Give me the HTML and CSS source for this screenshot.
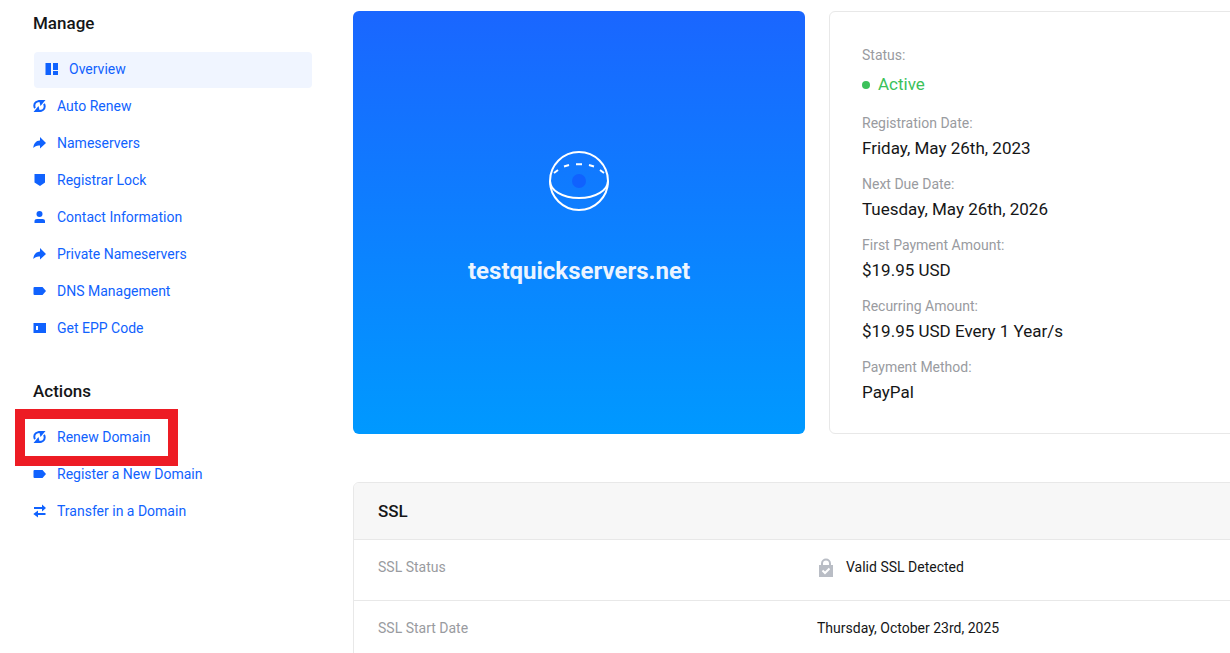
FILE: index.html
```html
<!DOCTYPE html>
<html lang="en">

<head>
    <meta charset="UTF-8">
    <meta name="viewport" content="width=device-width, initial-scale=1.0">
    <title>testquickservers.net</title>
    <link rel="stylesheet" href="styles.css">
</head>

<body>

    <!-- Shared icons -->
    <svg class="sprite" aria-hidden="true">
        <symbol id="icon-renew" viewBox="0 0 14 14">
            <path d="M7 2C3.500 2 1.300 4 1.300 6.500c0 1.300.2 2 .7 2.700M6 12c3.500 0 5.700-2 5.700-4.500 0-1.300-.2-2-.7-2.700" fill="none" stroke="currentColor" stroke-width="2" />
            <path d="M5 1H12.500L7.500 7 6.500 3zM8 13H.5L5.500 7l1 4z" fill="currentColor" />
        </symbol>
        <symbol id="icon-arrow" viewBox="0 0 14 14">
            <path d="M7 1 13 7 7 12.500V9.500C4 9.200 2 10 .3 12 .6 7.500 3 4.700 7 4.500z" fill="currentColor" />
        </symbol>
        <symbol id="icon-tag" viewBox="0 0 14 14">
            <path d="M1.500 3H9.500L13 7l-3.500 4h-8a1 1 0 0 1-1-1V4a1 1 0 0 1 1-1z" fill="currentColor" />
        </symbol>
    </svg>

    <div class="page">
        <!-- Sidebar -->
        <aside class="sidebar">
            <nav class="menu">
                <h2 class="menu-title">Manage</h2>
                <ul class="menu-list">
                    <li><a href="#" class="menu-link active">
                        <svg class="icon" viewBox="0 0 14 14"><path d="M.5 1h5.500v12H.5zM8 1h5v7H8zM8 9h5v4H8z" fill="currentColor" /></svg>
                        Overview</a></li>
                    <li><a href="#" class="menu-link"><svg class="icon"><use href="#icon-renew" /></svg>Auto Renew</a></li>
                    <li><a href="#" class="menu-link"><svg class="icon"><use href="#icon-arrow" /></svg>Nameservers</a></li>
                    <li><a href="#" class="menu-link">
                        <svg class="icon" viewBox="0 0 14 14"><path d="M1.500 1h10.500v8.500L7 13 1.500 9.500z" fill="currentColor" /></svg>
                        Registrar Lock</a></li>
                    <li><a href="#" class="menu-link">
                        <svg class="icon" viewBox="0 0 14 14"><circle cx="6.500" cy="4" r="3" fill="currentColor" /><path d="M1.500 13v-2c0-1.300 1-2 2.500-2h5.500c1.500 0 2.500.7 2.500 2v2z" fill="currentColor" /></svg>
                        Contact Information</a></li>
                    <li><a href="#" class="menu-link"><svg class="icon"><use href="#icon-arrow" /></svg>Private Nameservers</a></li>
                    <li><a href="#" class="menu-link"><svg class="icon"><use href="#icon-tag" /></svg>DNS Management</a></li>
                    <li><a href="#" class="menu-link">
                        <svg class="icon" viewBox="0 0 14 14"><path d="M.5 2H13v10H.5zM3 5v4h2V5z" fill="currentColor" fill-rule="evenodd" /></svg>
                        Get EPP Code</a></li>
                </ul>
            </nav>

            <nav class="menu">
                <h2 class="menu-title">Actions</h2>
                <ul class="menu-list">
                    <li class="highlight"><a href="#" class="menu-link"><svg class="icon"><use href="#icon-renew" /></svg>Renew Domain</a></li>
                    <li><a href="#" class="menu-link"><svg class="icon"><use href="#icon-tag" /></svg>Register a New Domain</a></li>
                    <li><a href="#" class="menu-link">
                        <svg class="icon" viewBox="0 0 14 14"><path d="M1 3h8V.5L13 4 9 7.500V5H1zM12.500 9H5V6.500L.3 10 5 13.500V11h7.500z" fill="currentColor" /></svg>
                        Transfer in a Domain</a></li>
                </ul>
            </nav>
        </aside>

        <!-- Domain details -->
        <main class="content">
            <div class="overview">
                <section class="domain-card">
                    <svg class="globe" viewBox="0 0 60 60" aria-hidden="true">
                        <circle cx="30" cy="30" r="29" fill="none" stroke="#fff" stroke-width="2" />
                        <path d="M1 30C1 39 13 47 30 47s29-8 29-17" fill="none" stroke="#fff" stroke-width="2" />
                        <path d="M5 22l4-3M15 15.500l5-1.500M27 13.200h6M40 14l5 1.500M51 19l4 3" fill="none" stroke="#fff" stroke-width="2" />
                        <circle cx="30" cy="30" r="7" fill="#1062fe" />
                    </svg>
                    <h1 class="domain-name">testquickservers.net</h1>
                </section>

                <dl class="info-card">
                    <div class="info-item">
                        <dt>Status:</dt>
                        <dd class="status">Active</dd>
                    </div>
                    <div class="info-item">
                        <dt>Registration Date:</dt>
                        <dd>Friday, May 26th, 2023</dd>
                    </div>
                    <div class="info-item">
                        <dt>Next Due Date:</dt>
                        <dd>Tuesday, May 26th, 2026</dd>
                    </div>
                    <div class="info-item">
                        <dt>First Payment Amount:</dt>
                        <dd>$19.95 USD</dd>
                    </div>
                    <div class="info-item">
                        <dt>Recurring Amount:</dt>
                        <dd>$19.95 USD Every 1 Year/s</dd>
                    </div>
                    <div class="info-item">
                        <dt>Payment Method:</dt>
                        <dd>PayPal</dd>
                    </div>
                </dl>
            </div>

            <section class="panel">
                <h2 class="panel-title">SSL</h2>
                <table class="panel-table">
                    <tbody>
                        <tr>
                            <th scope="row">SSL Status</th>
                            <td>
                                <span class="ssl-status">
                                    <svg class="lock" viewBox="0 0 18 20" aria-hidden="true">
                                        <path d="M5 9V6.500a4 4 0 0 1 8 0V9" fill="none" stroke="#b9bdc5" stroke-width="2" />
                                        <path d="M2 8h14v12H2z" fill="#b9bdc5" />
                                        <path d="M5.500 13.500 8 16l4.500-4.500" fill="none" stroke="#fff" stroke-width="2" />
                                    </svg>
                                    Valid SSL Detected
                                </span>
                            </td>
                        </tr>
                        <tr>
                            <th scope="row">SSL Start Date</th>
                            <td>Thursday, October 23rd, 2025</td>
                        </tr>
                    </tbody>
                </table>
            </section>
        </main>
    </div>

</body>

</html>
```

FILE: styles.css
```css
/* General Reset */
*,
*::before,
*::after {
    margin: 0;
    padding: 0;
    box-sizing: border-box;
}

body {
    font-family: Roboto, Arial, sans-serif;
    font-size: 14px;
    line-height: 22px;
    color: #151617;
    background: #fff;
    overflow-x: hidden;
}

.sprite {
    display: none;
}

.page {
    display: grid;
    grid-template-columns: 279px minmax(928px, 1fr);
    gap: 41px;
    padding: 11px 0 0 33px;
}

/* Sidebar */
.menu {
    margin-bottom: 32px;
}

.menu-title {
    font-size: 17px;
    font-weight: 500;
    line-height: 24px;
    margin-bottom: 17px;
}

.menu-list {
    list-style: none;
    display: grid;
    gap: 1px;
}

.menu-link {
    display: flex;
    align-items: center;
    gap: 10px;
    height: 36px;
    padding-bottom: 2px;
    color: #1062fe;
    text-decoration: none;
}

.menu-link.active {
    margin-left: 1px;
    padding-left: 11px;
    background: #f0f5ff;
    border-radius: 4px;
}

.icon {
    width: 14px;
    height: 14px;
    flex: none;
}

.highlight {
    position: relative;
}

.highlight::after {
    content: "";
    position: absolute;
    z-index: 1;
    top: -11px;
    left: -18px;
    width: 163px;
    height: 57px;
    border: 10px solid #ed1c24;
    pointer-events: none;
}

/* Overview cards */
.overview {
    display: grid;
    grid-template-columns: 1fr 1fr;
    gap: 24px;
    margin-bottom: 48px;
}

.domain-card {
    display: flex;
    flex-direction: column;
    align-items: center;
    justify-content: center;
    gap: 44px;
    padding-bottom: 8px;
    border-radius: 6px;
    background: linear-gradient(#1a66ff, #0099ff);
}

.globe {
    width: 60px;
    height: 60px;
}

.domain-name {
    font-size: 24px;
    font-weight: 700;
    line-height: 32px;
    color: #ecf4ff;
}

.info-card {
    padding: 33px 32px 28px;
    border: 1px solid #e8e8e8;
    border-radius: 6px;
}

.info-item + .info-item {
    margin-top: 13px;
}

.info-item dt {
    line-height: 20px;
    color: #999ba0;
}

.info-item dd {
    padding-top: 3px;
    font-size: 17px;
    line-height: 25px;
}

.info-item .status {
    display: flex;
    align-items: center;
    gap: 8px;
    padding: 7px 0 3px;
    color: #3bc15a;
}

.status::before {
    content: "";
    width: 8px;
    height: 8px;
    border-radius: 50%;
    background: #3bc15a;
}

/* SSL panel */
.panel {
    border: 1px solid #e8e8e8;
    border-radius: 6px;
    overflow: hidden;
}

.panel-title {
    padding: 16px 24px;
    font-size: 17px;
    font-weight: 500;
    line-height: 24px;
    background: #f7f7f7;
}

.panel-table {
    width: 100%;
    table-layout: fixed;
    border-collapse: collapse;
}

.panel-table th,
.panel-table td {
    height: 61px;
    padding: 16px 0;
    border-top: 1px solid #e8e8e8;
    text-align: left;
    vertical-align: top;
}

.panel-table th {
    padding-left: 24px;
    font-weight: 400;
    color: #999ba0;
}

.ssl-status {
    display: flex;
    align-items: center;
    gap: 11px;
}

.lock {
    width: 18px;
    height: 20px;
}
```
